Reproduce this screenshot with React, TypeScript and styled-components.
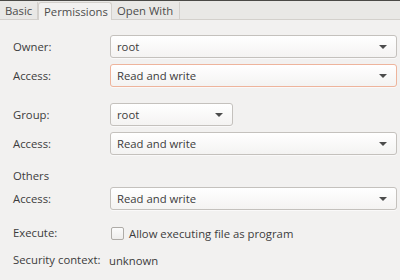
import React from "react";
import styled, { createGlobalStyle } from "styled-components";

const Global = createGlobalStyle`
  html, body { margin: 0; padding: 0; background: #f2f1f0; }
  body { font-family: "Open Sans", "Noto Sans", sans-serif; font-size: 11.3px; color: #3c3c3c; }
`;

const Page = styled.div`
  width: 400px;
  height: 280px;
  overflow: hidden;
  background: #f2f1f0;
  display: flex;
  flex-direction: column;
`;

const TabBar = styled.div`
  height: 18px;
  border-top: 1px solid #4a4946;
  border-bottom: 1px solid #d3d0cc;
  background: #e9e8e6;
  display: flex;
  align-items: flex-end;
`;

const Tab = styled.div<{ $active?: boolean; $w: number }>`
  width: ${(p) => p.$w}px;
  height: ${(p) => (p.$active ? "18px" : "17px")};
  box-sizing: border-box;
  padding-left: ${(p) => (p.$active ? "5px" : "5px")};
  display: flex;
  align-items: center;
  background: ${(p) => (p.$active ? "#f2f1f0" : "#e9e8e6")};
  border-right: 1px solid #d3d0cc;
  border-left: ${(p) => (p.$active ? "1px solid #d3d0cc" : "none")};
  border-top: ${(p) => (p.$active ? "1px solid #d3d0cc" : "none")};
  border-top-left-radius: ${(p) => (p.$active ? "3px" : "0")};
  border-top-right-radius: ${(p) => (p.$active ? "3px" : "0")};
  color: #4c4c4c;
  position: relative;
  top: ${(p) => (p.$active ? "1px" : "0")};
`;

const Content = styled.div`
  padding: 15px 3px 0 13px;
  display: flex;
  flex-direction: column;
`;

const Row = styled.div<{ $gap: number }>`
  display: grid;
  grid-template-columns: 97px 1fr;
  align-items: center;
  margin-top: ${(p) => p.$gap}px;
`;

const Label = styled.div`
  color: #3c3c3c;
  line-height: 16px;
`;

const Combo = styled.div<{ $focus?: boolean; $width?: number }>`
  box-sizing: border-box;
  height: 23px;
  width: ${(p) => (p.$width ? `${p.$width}px` : "100%")};
  border: 1px solid ${(p) => (p.$focus ? "#eeb49c" : "#c4c1bd")};
  border-radius: 3px;
  background: linear-gradient(#ffffff, #f4f3f2);
  box-shadow: 0 1px 0 rgba(255, 255, 255, 0.6);
  display: flex;
  align-items: center;
  justify-content: space-between;
  padding: 0 9px 0 6px;
  color: #3c3c3c;
`;

const Arrow = styled.span`
  width: 0;
  height: 0;
  border-left: 4px solid transparent;
  border-right: 4px solid transparent;
  border-top: 4px solid #4c4c4c;
  margin-top: 1px;
`;

const CheckWrap = styled.div`
  display: flex;
  align-items: center;
  gap: 5px;
  margin-left: 1px;
`;

const Box = styled.span`
  box-sizing: border-box;
  width: 13px;
  height: 13px;
  border: 1px solid #aeaba7;
  border-radius: 2px;
  background: linear-gradient(#fbfbfb, #eeedec);
`;

const Value = styled.div`
  margin-left: -1px;
`;

const ComboBox = ({ value, focus, width }: { value: string; focus?: boolean; width?: number }) => (
  <Combo $focus={focus} $width={width}>
    <span>{value}</span>
    <Arrow />
  </Combo>
);

export default function App() {
  return (
    <Page>
      <Global />
      <TabBar>
        <Tab $w={38}>Basic</Tab>
        <Tab $w={74} $active>Permissions</Tab>
        <Tab $w={68}>Open With</Tab>
      </TabBar>
      <Content>
        <Row $gap={0}>
          <Label>Owner:</Label>
          <ComboBox value="root" />
        </Row>
        <Row $gap={6}>
          <Label>Access:</Label>
          <ComboBox value="Read and write" focus />
        </Row>
        <Row $gap={16}>
          <Label>Group:</Label>
          <ComboBox value="root" width={123} />
        </Row>
        <Row $gap={6}>
          <Label>Access:</Label>
          <ComboBox value="Read and write" />
        </Row>
        <Row $gap={13}>
          <Label>Others</Label>
        </Row>
        <Row $gap={3}>
          <Label>Access:</Label>
          <ComboBox value="Read and write" />
        </Row>
        <Row $gap={15}>
          <Label>Execute:</Label>
          <CheckWrap>
            <Box />
            <span>Allow executing file as program</span>
          </CheckWrap>
        </Row>
        <Row $gap={11}>
          <Label>Security context:</Label>
          <Value>unknown</Value>
        </Row>
      </Content>
    </Page>
  );
}
